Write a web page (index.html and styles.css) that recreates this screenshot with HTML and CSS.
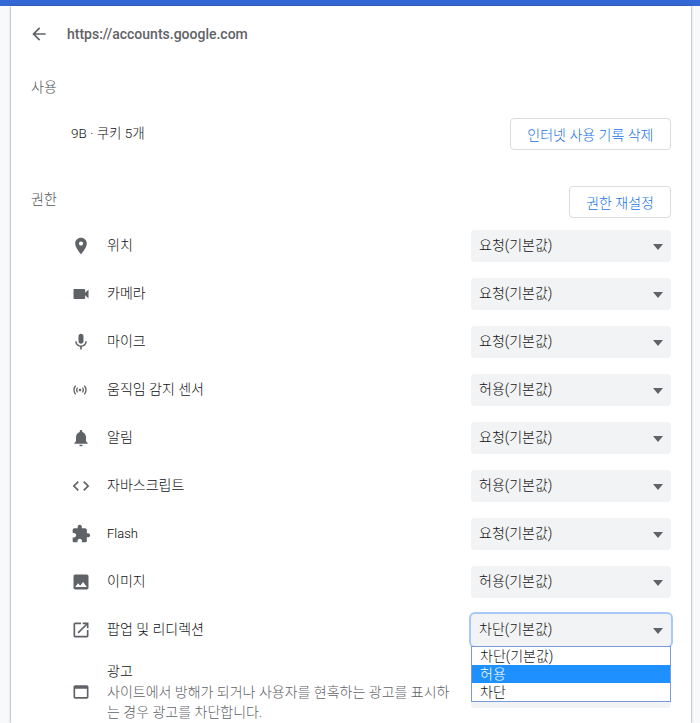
FILE: index.html
```html
<!DOCTYPE html>
<html lang="ko">
<head>
<meta charset="utf-8">
<title>사이트 설정</title>
<link rel="stylesheet" href="styles.css">
</head>
<body>
<div class="topbar"></div>
<main class="card">
  <header class="head">
    <svg class="icon" viewBox="0 0 24 24"><path d="M20 11H7.83l5.59-5.59L12 4l-8 8 8 8 1.41-1.41L7.83 13H20v-2z"/></svg>
    <span class="origin">https://accounts.google.com</span>
  </header>
  <div class="section-label usage-label">사용</div>
  <div class="usage-row">
    <span class="usage-text">9B · 쿠키 5개</span>
    <button class="btn">인터넷 사용 기록 삭제</button>
  </div>
  <div class="perm-head">
    <div class="section-label">권한</div>
    <button class="btn reset">권한 재설정</button>
  </div>
  <div class="row">
    <span class="icon-box"><svg class="icon" viewBox="0 0 24 24"><path d="M12 2C8.13 2 5 5.13 5 9c0 5.25 7 13 7 13s7-7.75 7-13c0-3.87-3.13-7-7-7zm0 9.5c-1.38 0-2.5-1.12-2.5-2.5s1.12-2.5 2.5-2.5 2.5 1.12 2.5 2.5-1.12 2.5-2.5 2.5z"/></svg></span>
    <span class="name">위치</span>
    <div class="select">요청(기본값)</div>
  </div>
  <div class="row">
    <span class="icon-box"><svg class="icon" viewBox="0 0 24 24"><path d="M17 10.5V7c0-.55-.45-1-1-1H4c-.55 0-1 .45-1 1v10c0 .55.45 1 1 1h12c.55 0 1-.45 1-1v-3.5l4 4v-11l-4 4z"/></svg></span>
    <span class="name">카메라</span>
    <div class="select">요청(기본값)</div>
  </div>
  <div class="row">
    <span class="icon-box"><svg class="icon" viewBox="0 0 24 24"><path d="M12 14c1.66 0 2.99-1.34 2.99-3L15 5c0-1.66-1.34-3-3-3S9 3.34 9 5v6c0 1.66 1.34 3 3 3zm5.3-3c0 3-2.54 5.1-5.3 5.1S6.7 14 6.7 11H5c0 3.41 2.72 6.23 6 6.72V21h2v-3.28c3.28-.48 6-3.3 6-6.72h-1.7z"/></svg></span>
    <span class="name">마이크</span>
    <div class="select">요청(기본값)</div>
  </div>
  <div class="row">
    <span class="icon-box"><svg class="icon small" viewBox="0 0 24 24"><path d="M7.76 16.24C6.67 15.16 6 13.66 6 12s.67-3.16 1.76-4.24l1.42 1.42C8.45 9.9 8 10.9 8 12c0 1.1.45 2.1 1.17 2.83l-1.41 1.41zm8.48 0C17.33 15.16 18 13.66 18 12s-.67-3.16-1.76-4.24l-1.42 1.42C15.55 9.9 16 10.9 16 12c0 1.1-.45 2.1-1.17 2.83l1.41 1.41zM12 10c-1.1 0-2 .9-2 2s.9 2 2 2 2-.9 2-2-.9-2-2-2zm8 2c0 2.21-.9 4.21-2.35 5.65l1.42 1.42C20.88 17.26 22 14.76 22 12s-1.12-5.26-2.93-7.07l-1.42 1.42C19.1 7.79 20 9.79 20 12zM6.35 6.35L4.93 4.93C3.12 6.74 2 9.24 2 12s1.12 5.26 2.93 7.07l1.42-1.42C4.9 16.21 4 14.21 4 12s.9-4.21 2.35-5.65z"/></svg></span>
    <span class="name">움직임 감지 센서</span>
    <div class="select">허용(기본값)</div>
  </div>
  <div class="row">
    <span class="icon-box"><svg class="icon" viewBox="0 0 24 24"><path d="M12 22c1.1 0 2-.9 2-2h-4c0 1.1.89 2 2 2zm6-6v-5c0-3.07-1.64-5.64-4.5-6.32V4c0-.83-.67-1.5-1.5-1.5s-1.5.67-1.5 1.5v.68C7.63 5.36 6 7.92 6 11v5l-2 2v1h16v-1l-2-2z"/></svg></span>
    <span class="name">알림</span>
    <div class="select">요청(기본값)</div>
  </div>
  <div class="row">
    <span class="icon-box"><svg class="icon" viewBox="0 0 24 24"><path d="M9.4 16.6L4.8 12l4.6-4.6L8 6l-6 6 6 6 1.4-1.4zm5.2 0l4.6-4.6-4.6-4.6L16 6l6 6-6 6-1.4-1.4z"/></svg></span>
    <span class="name">자바스크립트</span>
    <div class="select">허용(기본값)</div>
  </div>
  <div class="row">
    <span class="icon-box"><svg class="icon" viewBox="0 0 24 24"><path d="M20.5 11H19V7c0-1.1-.9-2-2-2h-4V3.5C13 2.12 11.88 1 10.5 1S8 2.12 8 3.5V5H4c-1.1 0-1.99.9-1.99 2v3.8H3.5c1.49 0 2.7 1.21 2.7 2.7s-1.21 2.7-2.7 2.7H2V20c0 1.1.9 2 2 2h3.8v-1.5c0-1.49 1.21-2.7 2.7-2.7 1.49 0 2.7 1.21 2.7 2.7V22H17c1.1 0 2-.9 2-2v-4h1.5c1.38 0 2.5-1.12 2.5-2.5S21.88 11 20.5 11z"/></svg></span>
    <span class="name latin">Flash</span>
    <div class="select">요청(기본값)</div>
  </div>
  <div class="row">
    <span class="icon-box"><svg class="icon" viewBox="0 0 24 24"><path d="M21 19V5c0-1.1-.9-2-2-2H5c-1.1 0-2 .9-2 2v14c0 1.1.9 2 2 2h14c1.1 0 2-.9 2-2zM8.5 13.5l2.5 3.01L14.5 12l4.5 6H5l3.5-4.5z"/></svg></span>
    <span class="name">이미지</span>
    <div class="select">허용(기본값)</div>
  </div>
  <div class="row">
    <span class="icon-box"><svg class="icon" viewBox="0 0 24 24"><path d="M19 19H5V5h7V3H5c-1.11 0-2 .9-2 2v14c0 1.1.89 2 2 2h14c1.1 0 2-.9 2-2v-7h-2v7zM14 3v2h3.59l-9.83 9.83 1.41 1.41L19 6.41V10h2V3h-7z"/></svg></span>
    <span class="name">팝업 및 리디렉션</span>
    <div class="select focused">차단(기본값)
      <ul class="menu">
        <li>차단(기본값)</li>
        <li class="active">허용</li>
        <li>차단</li>
      </ul>
    </div>
  </div>
  <div class="row ads">
    <span class="icon-box"><svg class="icon" viewBox="0 0 24 24"><path d="M19 4H5c-1.11 0-2 .9-2 2v12c0 1.1.89 2 2 2h14c1.1 0 1.99-.9 1.99-2L21 6c0-1.1-.9-2-2-2zm0 14H5V8h14v10z"/></svg></span>
    <div class="name ads-text">
      <div class="ads-title">광고</div>
      <div class="desc">사이트에서 방해가 되거나 사용자를 현혹하는 광고를 표시하는 경우 광고를 차단합니다.</div>
    </div>
    <div class="select"></div>
  </div>
</main>
</body>
</html>
```

FILE: styles.css
```css
* { box-sizing: border-box; }
html, body { margin: 0; height: 723px; overflow: hidden; }
body {
  background: #f8f9fa;
  font-family: Roboto, "Noto Sans CJK KR", sans-serif;
  font-size: 14px;
  font-weight: 300;
  color: #111;
}
.topbar { height: 6px; background: #3367d6; }
.card {
  width: 680px;
  margin-left: 11px;
  padding: 0 20px;
  height: 717px;
  background: #fff;
  box-shadow: 0 0 2px rgba(60, 64, 67, .75);
}
.icon { width: 20px; height: 20px; flex: none; fill: #5f6368; }
.icon.small { width: 16px; height: 16px; margin-right: 3px; }
.icon-box { width: 20px; height: 20px; margin-right: 16px; flex: none; display: flex; align-items: center; justify-content: center; }
.head { height: 56px; display: flex; align-items: center; gap: 18px; margin-left: -2px; }
.origin { font-weight: 500; color: #5f6368; }
.section-label { color: #4f5357; line-height: 18px; }
.usage-label { padding-top: 16px; height: 56px; }
.usage-row { height: 32px; display: flex; align-items: center; justify-content: space-between; padding-left: 40px; }
.usage-text { font-size: 13.5px; padding-bottom: 4px; }
.btn {
  height: 32px;
  padding: 0 16.5px;
  background: #fff;
  border: 1px solid #dadce0;
  border-radius: 4px;
  color: #1a73e8;
  font: inherit;
}
.reset { padding: 0 16px; }
.perm-head { display: flex; justify-content: space-between; align-items: flex-start; margin-top: 36px; margin-bottom: 4px; height: 32px; }
.perm-head .section-label { margin-top: 4px; }
.row { height: 48px; display: flex; align-items: center; padding-left: 40px; }
.name { flex: 1; min-width: 0; padding-bottom: 5px; }
.name.latin { font-size: 13px; color: #000; padding-bottom: 1px; }
.select {
  position: relative;
  flex: none;
  width: 200px;
  height: 32px;
  padding-left: 8px;
  line-height: 30px;
  background: #f1f3f4;
  border-radius: 4px;
}
.select::after {
  content: "";
  position: absolute;
  right: 8px;
  top: 14px;
  border-left: 5.5px solid transparent;
  border-right: 5.5px solid transparent;
  border-top: 6px solid #5f6368;
}
.focused { box-shadow: 0 0 0 2px #a8c7fa; }
.menu {
  position: absolute;
  z-index: 2;
  left: 0;
  top: 32px;
  width: 200px;
  margin: 0;
  padding: 0;
  list-style: none;
  background: #fff;
  border: 1px solid #7a9ad6;
  line-height: 18px;
}
.menu li { height: 18px; padding-left: 8px; }
.menu .active { background: #1e90ff; color: #fff; }
.ads { height: 76px; }
.ads-text { padding-bottom: 0; }
.ads-title { line-height: 16px; }
.desc { color: #5f6368; line-height: 20px; width: 346px; margin-top: 3px; }
```
